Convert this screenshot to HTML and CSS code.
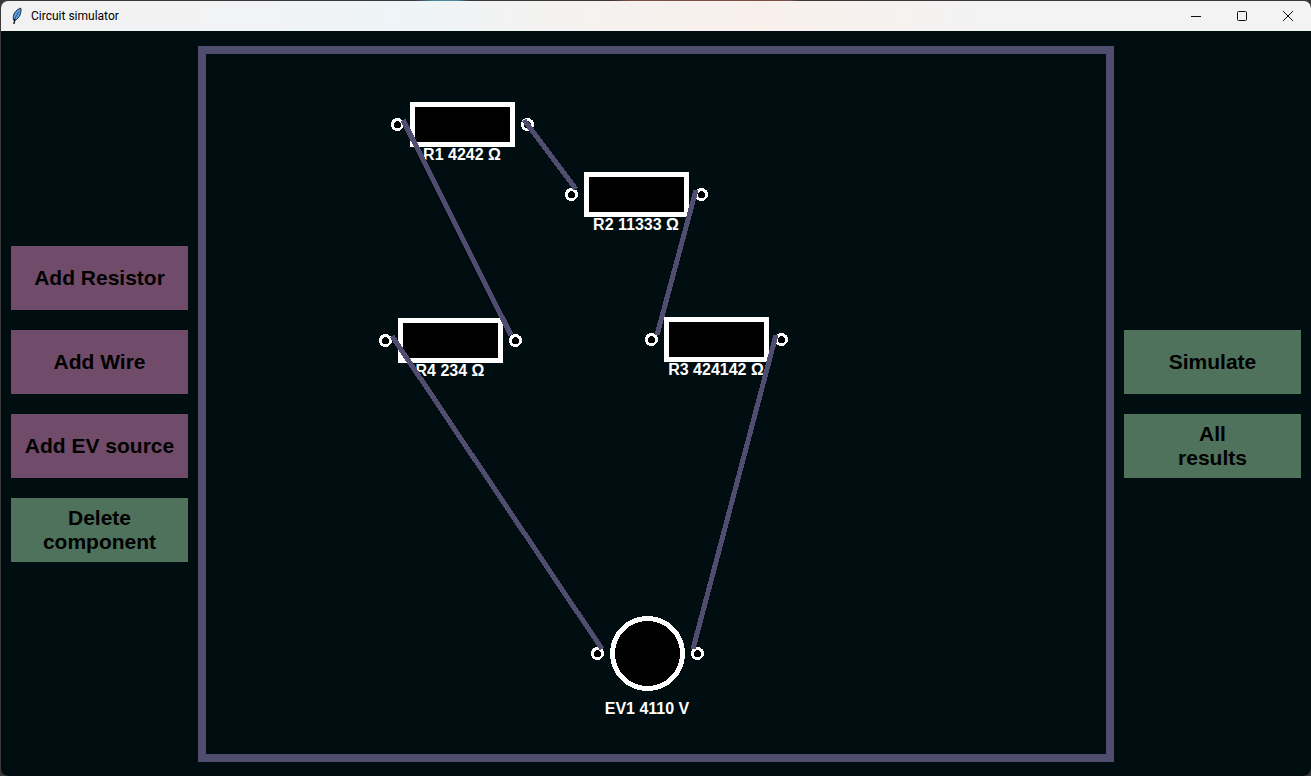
FILE: index.html
```html
<!DOCTYPE html>
<html lang="en">
<head>
<meta charset="utf-8">
<title>Circuit simulator</title>
<link rel="stylesheet" href="styles.css">
</head>
<body>
<div class="window">
  <header class="titlebar">
    <svg class="app-icon" width="16" height="18" viewBox="0 0 16 18" aria-hidden="true">
      <path d="M4.500 13C3.500 8 6 3 11.800 1.200C12.800 5.500 10.500 11 6 13.500Z" fill="#5b9fe6" stroke="#1b2836" stroke-width="1"/>
      <path d="M10 4.500C8 7 6.500 10 5.500 13" fill="none" stroke="#1b3a5c" stroke-width="0.800"/>
      <path d="M5.800 12L5 17" fill="none" stroke="#10161e" stroke-width="1.400"/>
    </svg>
    <h1 class="title">Circuit simulator</h1>
    <div class="controls">
      <button class="control" type="button" aria-label="Minimize">
        <svg width="12" height="12" viewBox="0 0 12 12"><path d="M1 6.500H11"/></svg>
      </button>
      <button class="control" type="button" aria-label="Maximize">
        <svg width="12" height="12" viewBox="0 0 12 12"><rect x="1.500" y="1.500" width="9" height="9" rx="1"/></svg>
      </button>
      <button class="control" type="button" aria-label="Close">
        <svg width="12" height="12" viewBox="0 0 12 12"><path d="M1 1L11 11M11 1L1 11"/></svg>
      </button>
    </div>
  </header>
  <main class="workspace">
    <nav class="tools" aria-label="Edit">
      <button class="tool add" type="button">Add Resistor</button>
      <button class="tool add" type="button">Add Wire</button>
      <button class="tool add" type="button">Add EV source</button>
      <button class="tool action" type="button">Delete<br>component</button>
    </nav>
    <section class="board" aria-label="Circuit">
      <svg class="circuit">
        <defs>
          <g id="resistor">
            <rect class="part" x="-50" y="-20" width="100" height="40"/>
            <circle class="terminal" cx="-65" r="5"/>
            <circle class="terminal" cx="65" r="5"/>
          </g>
          <g id="source">
            <circle class="part" r="35"/>
            <circle class="terminal" cx="-50" r="5"/>
            <circle class="terminal" cx="50" r="5"/>
          </g>
        </defs>
        <g transform="translate(0.5 0.5)">
          <use href="#resistor" x="256" y="70"/>
          <use href="#resistor" x="430" y="140"/>
          <use href="#resistor" x="510" y="285"/>
          <use href="#resistor" x="244" y="286"/>
          <use href="#source" x="441" y="599"/>
        </g>
        <g class="labels">
          <text x="256" y="106">R1 4242 Ω</text>
          <text x="430" y="176">R2 11333 Ω</text>
          <text x="510" y="321">R3 424142 Ω</text>
          <text x="244" y="322">R4 234 Ω</text>
          <text x="441" y="660">EV1 4110 V</text>
        </g>
        <g class="wires">
          <path d="M318 66L370 135"/>
          <path d="M490 136L451 281"/>
          <path d="M570 281L487 595"/>
          <path d="M197 66L305 281"/>
          <path d="M186 282L396 595"/>
        </g>
      </svg>
    </section>
    <nav class="tools" aria-label="Results">
      <button class="tool action" type="button">Simulate</button>
      <button class="tool action" type="button">All<br>results</button>
    </nav>
  </main>
</div>
</body>
</html>
```
FILE: styles.css
```css
* {
  box-sizing: border-box;
}

body {
  margin: 0;
  background: linear-gradient(90deg, #3a3738 0 414px, #4a8a9a 434px 457px, #3a3738 470px 610px, #7a5048 630px 790px, #3a3738 800px);
}

.window {
  display: flex;
  flex-direction: column;
  min-height: 100vh;
  padding: 1px 0 0 1px;
  border-radius: 8px;
  overflow: hidden;
  background: linear-gradient(#3a3a3a, #3a3a3a) left / 1px 100% no-repeat;
}

.titlebar {
  display: flex;
  align-items: center;
  height: 30px;
  padding-left: 8px;
  border-radius: 7px 7px 0 0;
  background: linear-gradient(90deg, #f2f2f3 0%, #f2f3f4 18%, #eef4f7 30%, #f5f2ef 45%, #f9f0ec 58%, #f3f3f3 75%, #f3f3f3 100%);
}

.title {
  flex: 1;
  margin: 0 0 0 6px;
  font: 400 12px/16px Roboto, "Open Sans", sans-serif;
  color: #000;
}

.controls {
  display: flex;
  height: 100%;
}

.control {
  display: flex;
  align-items: center;
  justify-content: center;
  width: 46px;
  padding: 0;
  border: 0;
  background: transparent;
}

.control path,
.control rect {
  fill: none;
  stroke: #111;
  stroke-width: 1;
}

.workspace {
  flex: 1;
  display: flex;
  gap: 10px;
  padding: 15px 10px 14px;
  border-radius: 0 0 7px 7px;
  background: #000d11;
}

.tools {
  display: flex;
  flex-direction: column;
  justify-content: center;
  gap: 20px;
  width: 177px;
}

.tool {
  height: 64px;
  padding: 0;
  border: 0;
  font: bold 21px/24px "Liberation Sans", Arial, sans-serif;
  color: #000;
}

.add {
  background: #714c6a;
}

.action {
  background: #4e725c;
}

.board {
  flex: 1;
  display: flex;
  border: 8px solid #504d71;
}

.circuit {
  flex: 1;
  min-height: 700px;
}

.part,
.terminal {
  fill: #000;
  stroke: #fff;
  shape-rendering: crispEdges;
}

.part {
  stroke-width: 5;
}

.terminal {
  stroke-width: 3;
}

.labels {
  fill: #fff;
  font: bold 16px "Liberation Sans", Arial, sans-serif;
  text-anchor: middle;
}

.wires {
  fill: none;
  stroke: #504d71;
  stroke-width: 5;
  shape-rendering: crispEdges;
}
```
